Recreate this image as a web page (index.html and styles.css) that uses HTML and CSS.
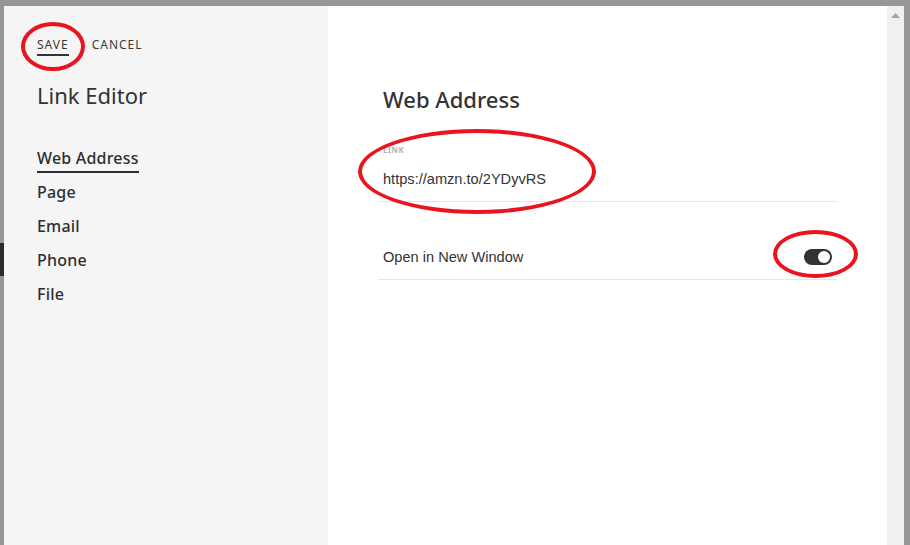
FILE: index.html
```html
<!DOCTYPE html>
<html lang="en">

<head>
    <meta charset="utf-8">
    <title>Link Editor</title>
    <link rel="stylesheet" href="styles.css">
</head>

<body>
    <div class="backdrop">
        <div class="peek"></div>
        <div class="dialog">
            <div class="sidebar">
                <div class="actions">
                    <button class="action active">SAVE</button>
                    <button class="action">CANCEL</button>
                </div>
                <h1 class="title">Link Editor</h1>
                <ul class="nav">
                    <li class="navlink active">Web Address</li>
                    <li class="navlink">Page</li>
                    <li class="navlink">Email</li>
                    <li class="navlink">Phone</li>
                    <li class="navlink">File</li>
                </ul>
            </div>

            <div class="content">
                <h2 class="heading">Web Address</h2>
                <div class="field">
                    <div class="label">LINK</div>
                    <div class="value">https://amzn.to/2YDyvRS</div>
                </div>
                <div class="row">
                    <span>Open in New Window</span>
                    <span class="toggle"><span class="knob"></span></span>
                </div>
            </div>

            <div class="scrollbar">
                <svg class="arrow" width="9" height="5" viewBox="0 0 9 5">
                    <polygon points="4.5,0 9,5 0,5" fill="#a3a3a3" />
                </svg>
            </div>
        </div>

        <!-- annotation marks -->
        <div class="mark mark-save"></div>
        <div class="mark mark-link"></div>
        <div class="mark mark-toggle"></div>
    </div>
</body>

</html>
```

FILE: styles.css
```css
body {
    margin: 0;
    padding: 0;
    background-color: #979797;
    font-family: "Noto Sans", Arial, sans-serif;
}

.backdrop {
    position: relative;
    width: 910px;
    height: 545px;
    box-sizing: border-box;
    padding: 6px 6px 0 4px;
    overflow: hidden;
}

.peek {
    position: absolute;
    left: 0;
    top: 243px;
    width: 4px;
    height: 33px;
    background-color: #2b2b2b;
}

.dialog {
    display: flex;
    height: 539px;
}

.sidebar {
    width: 324px;
    background-color: #f5f5f5;
    padding: 30px 0 0 33px;
    box-sizing: border-box;
}

.actions {
    display: flex;
    gap: 23px;
}

.action {
    background: none;
    border: none;
    padding: 0 0 1px 0;
    font-family: inherit;
    font-size: 12px;
    letter-spacing: 1px;
    color: #3a3a3a;
    border-bottom: 2px solid transparent;
    cursor: pointer;
}

.action.active {
    border-bottom-color: #333;
}

.title {
    margin: 24px 0 0 0;
    font-size: 22px;
    font-weight: 400;
    color: #333;
    line-height: 30px;
}

.nav {
    list-style: none;
    margin: 38px 0 0 0;
    padding: 0;
}

.navlink {
    display: table;
    font-size: 16px;
    font-weight: 500;
    letter-spacing: 0.2px;
    color: #2e2e2e;
    line-height: 20px;
    margin-bottom: 14px;
    cursor: pointer;
}

.navlink.active {
    border-bottom: 2px solid #2e2e2e;
    padding-bottom: 3px;
    margin-bottom: 9px;
}

.content {
    flex: 1;
    background-color: #fff;
    padding: 78px 50px 0 50px;
    box-sizing: border-box;
}

.heading {
    margin: 0 0 0 5px;
    font-size: 22px;
    font-weight: 500;
    color: #333;
    line-height: 30px;
}

.field {
    margin-top: 30px;
    padding: 0 0 13px 5px;
    border-bottom: 1px solid #e6e6e6;
}

.label {
    font-size: 8px;
    font-weight: 700;
    color: #b3b3b3;
    letter-spacing: 0.5px;
    line-height: 12px;
}

.value {
    margin-top: 14px;
    font-family: "Liberation Sans", Arial, sans-serif;
    font-size: 14.6px;
    color: #333;
    line-height: 18px;
}

.row {
    display: flex;
    justify-content: space-between;
    align-items: center;
    height: 44px;
    padding: 33px 5px 0 5px;
    border-bottom: 1px solid #e6e6e6;
    font-family: "Liberation Sans", Arial, sans-serif;
    font-size: 14.6px;
    color: #333;
}

.toggle {
    display: flex;
    justify-content: flex-end;
    align-items: center;
    width: 28px;
    height: 16px;
    border-radius: 8px;
    background-color: #333;
    padding: 0 2px;
    box-sizing: border-box;
}

.knob {
    width: 12px;
    height: 12px;
    border-radius: 50%;
    background-color: #fff;
}

.scrollbar {
    width: 17px;
    background-color: #f0f0f0;
    display: flex;
    justify-content: center;
    align-items: flex-start;
    padding-top: 7px;
    box-sizing: border-box;
}

.mark {
    position: absolute;
    border: 4px solid #e8141e;
    border-radius: 50%;
    box-sizing: border-box;
}

.mark-save {
    left: 21px;
    top: 22px;
    width: 64px;
    height: 49px;
}

.mark-link {
    left: 358px;
    top: 129px;
    width: 238px;
    height: 85px;
}

.mark-toggle {
    left: 773px;
    top: 230px;
    width: 85px;
    height: 48px;
}
```
